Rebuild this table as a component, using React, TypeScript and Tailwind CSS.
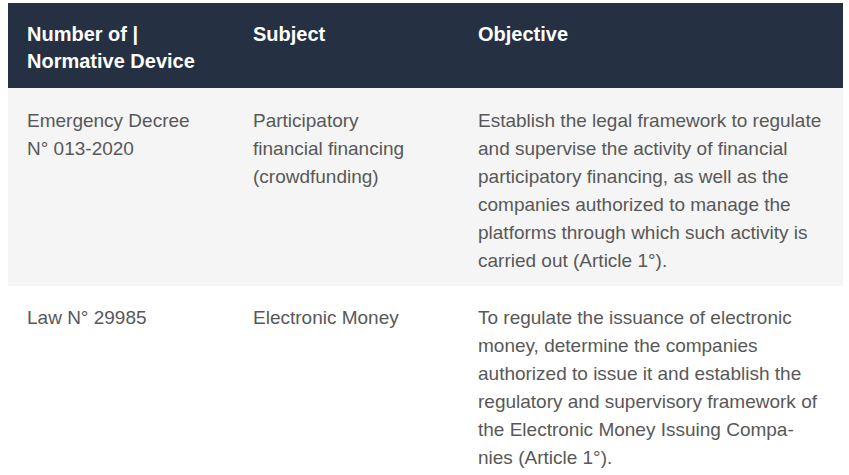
import type { ReactNode } from "react"

type Row = {
  device: string[]
  subject: string
  objective: ReactNode
  shaded: boolean
}

const rows: Row[] = [
  {
    device: ["Emergency Decree", "N° 013-2020"],
    subject: "Participatory financial financing (crowdfunding)",
    objective:
      "Establish the legal framework to regulate and supervise the activity of financial participatory financing, as well as the companies authorized to manage the platforms through which such activity is carried out (Article 1°).",
    shaded: true,
  },
  {
    device: ["Law N° 29985"],
    subject: "Electronic Money",
    objective: (
      <>
        To regulate the issuance of electronic money, determine the companies
        authorized to issue it and establish the regulatory and supervisory
        framework of the Electronic Money Issuing Compa-
        <br />
        nies (Article 1°).
      </>
    ),
    shaded: false,
  },
]

export default function App() {
  return (
    <main
      className="w-[849px] h-[475px] overflow-hidden bg-white pt-[3px] pl-[8px] pr-[6px]"
      style={{ fontFamily: '"Liberation Sans", Arial, sans-serif' }}
    >
      {/* header */}
      <div className="grid grid-cols-[226px_225px_1fr] bg-[#253142] text-white font-bold text-[20px] leading-[27px] h-[85px]">
        <div className="pl-[19px] pt-[18px]">
          Number of |<br />
          Normative Device
        </div>
        <div className="pl-[19px] pt-[18px]">Subject</div>
        <div className="pl-[19px] pt-[18px]">Objective</div>
      </div>
      {rows.map((r, i) => (
        <div
          key={i}
          className={
            "grid grid-cols-[226px_225px_1fr] text-[19px] leading-[28px] text-[#585858] " +
            (r.shaded ? "bg-[#f5f5f5] pt-[19px] pb-[11px]" : "bg-white pt-[18px]")
          }
        >
          <div className="pl-[19px] pr-3">
            {r.device.map((d, j) => (
              <div key={j}>{d}</div>
            ))}
          </div>
          <div className="pl-[19px] pr-[50px]">{r.subject}</div>
          <div className="pl-[19px] pr-[14px]">{r.objective}</div>
        </div>
      ))}
    </main>
  )
}
